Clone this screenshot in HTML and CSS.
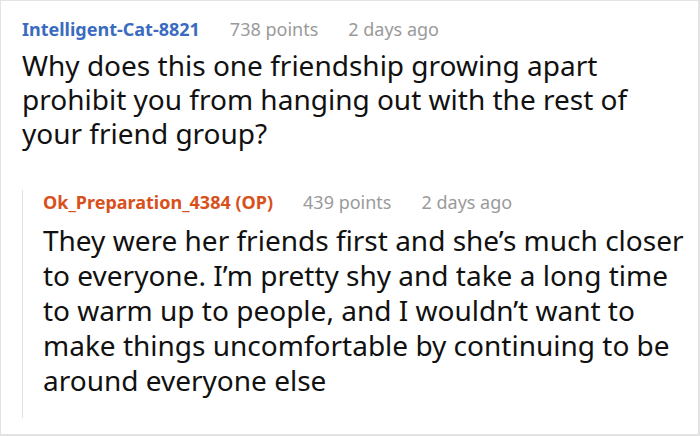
FILE: index.html
```html
<!DOCTYPE html>
<html>
<head>
<meta charset="utf-8">
<link rel="stylesheet" href="styles.css">
</head>
<body>
<div class="frame">
  <div class="comment">
    <div class="meta">
      <span class="user">Intelligent-Cat-8821</span>
      <span class="info">738 points</span>
      <span class="info">2 days ago</span>
    </div>
    <p class="body">Why does this one friendship growing apart prohibit you from hanging out with the rest of your friend group?</p>
    <div class="reply">
      <div class="meta">
        <span class="user op">Ok_Preparation_4384 (OP)</span>
        <span class="info">439 points</span>
        <span class="info">2 days ago</span>
      </div>
      <p class="body narrow">They were her friends first and she’s much closer to everyone. I’m pretty shy and take a long time to warm up to people, and I wouldn’t want to make things uncomfortable by continuing to be around everyone else</p>
    </div>
  </div>
</div>
</body>
</html>
```
FILE: styles.css
```css
html, body { margin: 0; padding: 0; background: #fff; }
.frame {
  width: 700px;
  height: 436px;
  box-sizing: border-box;
  border: 1px solid #e3e3e3;
  border-right-width: 2px;
  border-bottom-width: 2px;
  overflow: hidden;
  font-family: "Noto Sans", sans-serif;
}
.comment { padding: 16px 0 0 21px; }
.meta { display: flex; gap: 30px; font-size: 18px; line-height: 24px; }
.user { font-weight: bold; color: #3a6bc0; }
.user.op { color: #d8511c; }
.info { color: #9a9a9a; }
.body {
  margin: 7px 0 0;
  font-size: 28px;
  line-height: 34px;
  color: #111;
  padding-right: 60px;
}
.reply {
  margin-top: 50px;
  border-left: 1px solid #e2e2e2;
  padding: 0 0 20px 20px;
}
.reply .meta { margin-top: -10px; }
.body.narrow { padding-right: 0; line-height: 35px; margin-top: 9px; }
```
